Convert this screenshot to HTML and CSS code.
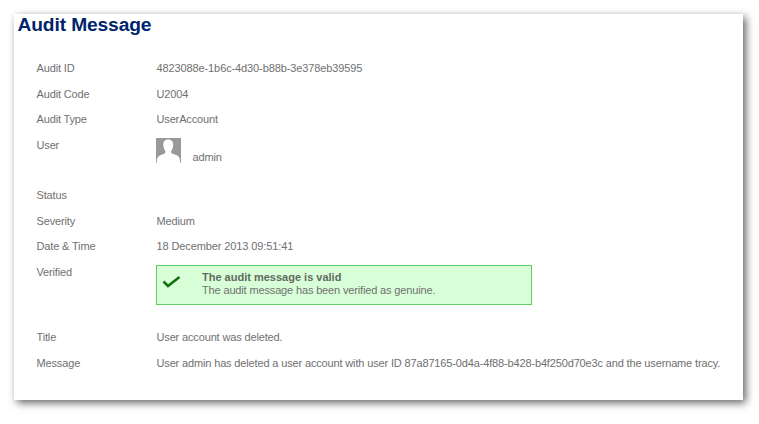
FILE: index.html
```html
<!DOCTYPE html>
<html lang="en"><head><meta charset="utf-8"><title>Audit Message</title><link rel="stylesheet" href="styles.css"></head>
<body>
<main class="panel">
<h1>Audit Message</h1>
<dl class="fields">
<dt>Audit ID</dt><dd class="identifier">4823088e-1b6c-4d30-b88b-3e378eb39595</dd>
<dt>Audit Code</dt><dd>U2004</dd>
<dt>Audit Type</dt><dd>UserAccount</dd>
<dt>User</dt><dd class="user"><svg class="avatar" viewBox="0 0 25 25"><rect width="25" height="25" fill="#999"/><path fill="#fff" d="M12.200 1.500C8.500 1.500 7 4 7.300 7.500C7.500 10 8.800 12 9.500 13.500C9.500 15.500 8 16 5 17C1.800 18 1 20 .7 25H24.300C24 20 23.200 18 20 17C17 16 15 15.500 15 13.500C16 12 17 10 17.200 7.500C17.500 4 15.800 1.500 12.200 1.500Z"/></svg><span>admin</span></dd>
<dt>Status</dt><dd></dd>
<dt>Severity</dt><dd>Medium</dd>
<dt>Date &amp; Time</dt><dd class="identifier">18 December 2013 09:51:41</dd>
<dt>Verified</dt><dd class="verified"><div class="notice"><svg class="check" viewBox="0 0 20 14"><path d="M1.500 6.500L6 11L17.500 2" fill="none" stroke="#107510" stroke-width="2.600"/></svg><div><strong>The audit message is valid</strong><p>The audit message has been verified as genuine.</p></div></div></dd>
<dt>Title</dt><dd>User account was deleted.</dd>
<dt>Message</dt><dd>User admin has deleted a user account with user ID 87a87165-0d4a-4f88-b428-b4f250d70e3c and the username tracy.</dd>
</dl>
</main>
</body></html>
```
FILE: styles.css
```css
* { box-sizing: border-box; }
body { margin: 0; min-height: 424px; padding: 14px 0 0 14px; background: #fff; font: 11px/13px "Liberation Sans", Arial, sans-serif; letter-spacing: -.148px; color: #707070; }
.panel { width: 729px; height: 386px; background: #fff; box-shadow: 3px 3px 8px rgba(0,0,0,.6); overflow: hidden; }
h1 { margin: 0 0 0 3.500px; font-size: 19.200px; line-height: 22px; letter-spacing: -.12px; color: #00246b; }
.fields { display: grid; grid-template-columns: 120px 1fr; grid-template-rows: 25.500px 25.500px 25.500px 50.500px 25.500px 25.500px 25.500px 65.500px 25.500px 25.500px; margin: 26px 0 0 22.500px; white-space: nowrap; }
dd, p { margin: 0; }
.identifier { letter-spacing: -.11px; }
.user { display: flex; gap: 11.500px; }
.user span { padding-top: 12px; }
.avatar { width: 25px; height: 25px; margin: -1px 0 0 -.5px; }
.notice { display: flex; width: 376px; height: 40px; margin: -1px 0 0 -.5px; border: 1px solid #65c965; background: #d9ffd9; padding: 5px 5px; }
.notice strong { letter-spacing: 0; color: #5f6b5f; }
.check { width: 20px; height: 14px; margin: 4px 20px 0 0; }
```
